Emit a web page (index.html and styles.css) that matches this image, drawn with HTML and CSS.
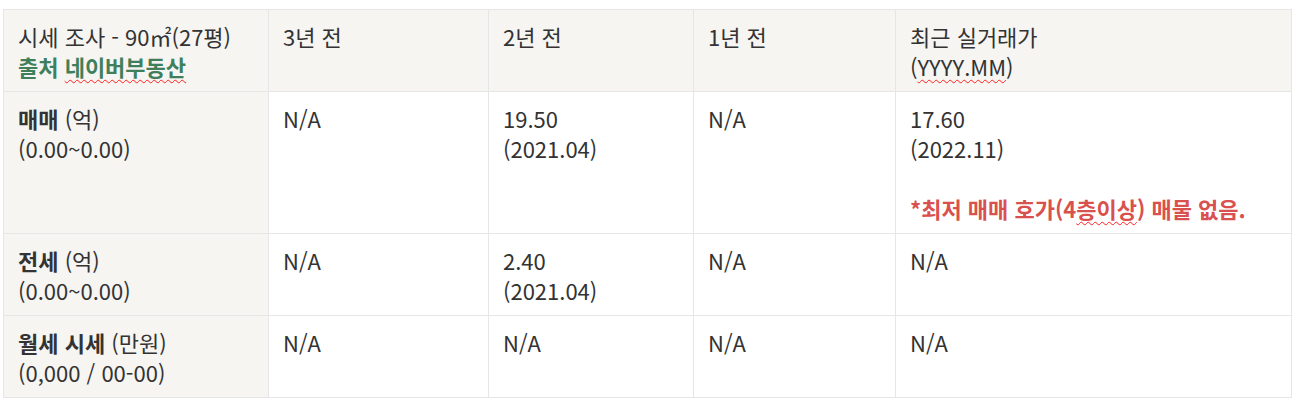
FILE: index.html
```html
<!DOCTYPE html>
<html lang="ko">
<head>
<meta charset="utf-8">
<link rel="stylesheet" href="styles.css">
</head>
<body>
<div class="wrap">
<table class="price">
  <colgroup>
    <col class="c1"><col class="c2"><col class="c3"><col class="c4"><col class="c5">
  </colgroup>
  <tr class="head">
    <td class="label">시세 조사 - 90㎡(27평)<br><span class="src">출처 <span class="spell">네이버부동산</span></span></td>
    <td>3년 전</td>
    <td>2년 전</td>
    <td>1년 전</td>
    <td>최근 실거래가<br>(<span class="spell">YYYY.MM</span>)</td>
  </tr>
  <tr>
    <td class="label"><b>매매</b> (억)<br>(0.00~0.00)</td>
    <td>N/A</td>
    <td>19.50<br>(2021.04)</td>
    <td>N/A</td>
    <td>17.60<br>(2022.11)<br><br><b class="warn">*최저 매매 호가(4<span class="spell">층이상</span>) 매물 없음.</b></td>
  </tr>
  <tr>
    <td class="label"><b>전세</b> (억)<br>(0.00~0.00)</td>
    <td>N/A</td>
    <td>2.40<br>(2021.04)</td>
    <td>N/A</td>
    <td>N/A</td>
  </tr>
  <tr>
    <td class="label"><b>월세 시세</b> (만원)<br>(0,000 / 00-00)</td>
    <td>N/A</td>
    <td>N/A</td>
    <td>N/A</td>
    <td>N/A</td>
  </tr>
</table>
</div>
</body>
</html>
```

FILE: styles.css
```css
html, body {
  margin: 0;
  padding: 0;
  background: #ffffff;
}
.wrap {
  padding: 9px 0 0 3px;
}
.price {
  border-collapse: collapse;
  width: 1289px;
  table-layout: fixed;
  font-family: "Noto Sans CJK KR", "Open Sans", sans-serif;
  font-size: 22px;
  line-height: 30px;
  color: #333333;
}
.c1 { width: 265px; }
.c2 { width: 220px; }
.c3 { width: 205px; }
.c4 { width: 202px; }
.c5 { width: 396px; }
.price td {
  border: 1px solid #e6e6e6;
  padding: 11px 12px 10px 14px;
  vertical-align: top;
  text-align: left;
  white-space: nowrap;
}
.head td {
  background: #f6f5f2;
}
.price td.label {
  background: #f6f5f2;
}
.price b {
  font-weight: 700;
}
.src {
  color: #3f7f5b;
  font-weight: 700;
}
.warn {
  color: #d9514e;
}
.spell {
  text-decoration: underline wavy #ff2020;
  text-decoration-thickness: 1px;
  text-underline-offset: 3px;
}
```
